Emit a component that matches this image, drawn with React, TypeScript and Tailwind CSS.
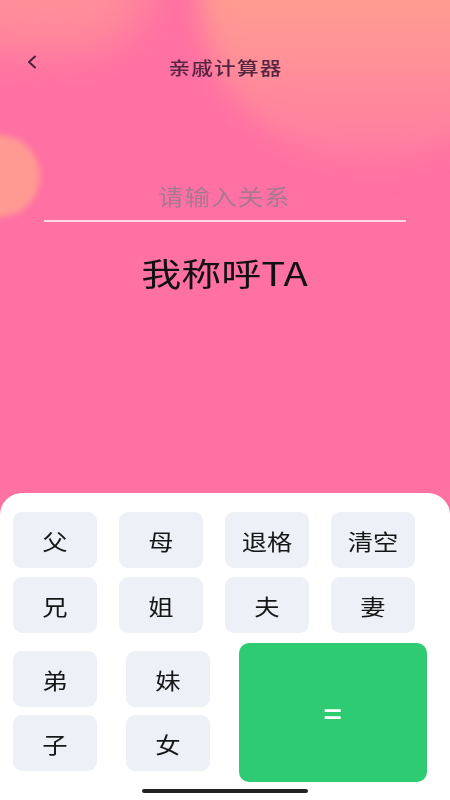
import React from 'react';

const font = { fontFamily: '"Noto Sans CJK SC", "Noto Sans", sans-serif' };

const Key: React.FC<{ label: string }> = ({ label }) => (
  <button className="w-[84px] h-[56px] rounded-[9px] bg-[#edf0f6] flex items-center justify-center">
    <span className="inline-block scale-x-[1.15] text-[22px] text-[#161616]">{label}</span>
  </button>
);

export default function App() {
  const row1 = ['父', '母', '退格', '清空'];
  const row2 = ['兄', '姐', '夫', '妻'];

  return (
    <div className="relative w-[450px] h-[800px] overflow-hidden bg-[#ff70a3] flex flex-col" style={font}>
      {/* background blobs */}
      <div className="absolute -top-[175px] right-[-95px] w-[345px] h-[340px] rounded-full bg-gradient-to-b from-[#ffb38b] via-[#ff9d90] to-[#ff7aa2] blur-[14px]" />
      <div className="absolute -top-[90px] -left-[60px] w-[210px] h-[140px] rounded-full bg-[#ff9c95] opacity-70 blur-[24px]" />
      <div className="absolute top-[135px] -left-[42px] w-[82px] h-[82px] rounded-full bg-[#ff9a92] blur-[3px]" />

      {/* header */}
      <div className="relative h-[34px] mt-[50px] flex items-center justify-center">
        <svg className="absolute left-[25px] top-[3px]" width="14" height="18" viewBox="0 0 14 18" fill="none">
          <path d="M10 3.5 L4 9 L10 14.5" stroke="#4a2238" strokeWidth="2" strokeLinecap="round" strokeLinejoin="round" />
        </svg>
        <span className="inline-block scale-x-[1.2] text-[18px] font-medium text-[#552640] tracking-[1px]">亲戚计算器</span>
      </div>

      {/* input */}
      <div className="relative mt-[96px] flex flex-col items-center">
        <div className="inline-block scale-x-[1.15] text-[22px] leading-[30px] text-[#a8788f] tracking-[1px]">请输入关系</div>
        <div className="mt-[10px] w-[362px] h-[2px] bg-[#ffd6e6]" />
        <div className="mt-[30px] inline-block scale-x-[1.25] text-[32px] leading-[40px] text-[#111]">我称呼TA</div>
      </div>

      {/* keypad */}
      <div className="relative mt-auto h-[307px] bg-white rounded-t-[22px] px-[13px] pt-[19px]">
        <div className="flex gap-[22px]">
          {row1.map((k) => (
            <Key key={k} label={k} />
          ))}
        </div>
        <div className="flex gap-[22px] mt-[9px]">
          {row2.map((k) => (
            <Key key={k} label={k} />
          ))}
        </div>
        <div className="flex mt-[10px]">
          <div className="pt-[8px] flex flex-col gap-[8px]">
            <div className="flex gap-[29px]">
              <Key label="弟" />
              <Key label="妹" />
            </div>
            <div className="flex gap-[29px]">
              <Key label="子" />
              <Key label="女" />
            </div>
          </div>
          <button className="ml-[29px] w-[188px] h-[139px] rounded-[10px] bg-[#2ecb72] flex items-center justify-center">
            <span className="inline-block scale-x-[1.2] text-[26px] font-bold text-white">=</span>
          </button>
        </div>
        <div className="absolute left-[142px] bottom-[7px] w-[166px] h-[4px] rounded-full bg-[#222]" />
      </div>
    </div>
  );
}
